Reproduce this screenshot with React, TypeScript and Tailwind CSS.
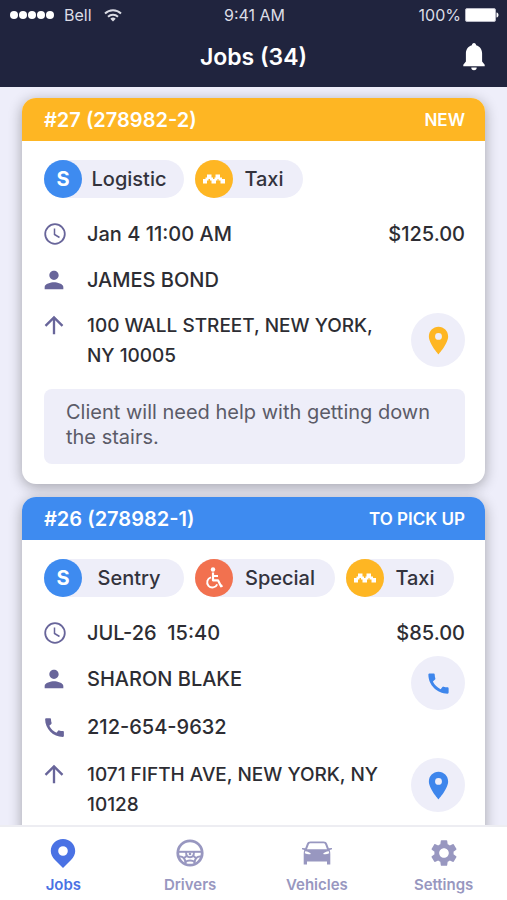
import type { ReactNode } from "react";
import { MdArrowUpward, MdCall, MdLocationOn, MdPerson, MdSettings } from "react-icons/md";

type Service = "logistic" | "sentry" | "special" | "taxi";

type Job = {
  title: string;
  status: string;
  headerClass: string;
  accentClass: string;
  services: Service[];
  time: string;
  price: string;
  client: string;
  phone?: string;
  address: string;
  note?: string;
};

const jobs: Job[] = [
  {
    title: "#27 (278982-2)",
    status: "NEW",
    headerClass: "bg-[#feb623]",
    accentClass: "text-[#feb623]",
    services: ["logistic", "taxi"],
    time: "Jan 4 11:00 AM",
    price: "$125.00",
    client: "JAMES BOND",
    address: "100 WALL STREET, NEW YORK, NY 10005",
    note: "Client will need help with getting down the stairs.",
  },
  {
    title: "#26 (278982-1)",
    status: "TO PICK UP",
    headerClass: "bg-[#3e8bf0]",
    accentClass: "text-[#3e86ec]",
    services: ["sentry", "special", "taxi"],
    time: "JUL-26  15:40",
    price: "$85.00",
    client: "SHARON BLAKE",
    phone: "212-654-9632",
    address: "1071 FIFTH AVE, NEW YORK, NY 10128",
  },
];

function TaxiIcon() {
  return (
    <svg width="24" height="12" viewBox="0 0 24 12" fill="currentColor" aria-hidden="true">
      <path d="M1 6h4v4.500H1zM5 1.500h4.500V6H5zM9.500 6h4.500v4.500H9.500zM13.500 1.500H18V6h-4.500zM18.500 6H23v4.500h-4.500z" />
      <path d="M3.500 4.500h3v3h-3zM8 4.500h3v3H8zM12.500 4.500h3v3h-3zM16.500 4.500h3.500v3h-3.500z" />
    </svg>
  );
}

function WheelchairIcon() {
  return (
    <svg width="18" height="22" viewBox="0 0 18 22" fill="none" stroke="currentColor" aria-hidden="true">
      <circle cx="8" cy="2.500" r="2.200" fill="currentColor" stroke="none" />
      <path d="M8 5.500v7.800h5l3 6 1.500-.8" strokeWidth="2.200" strokeLinejoin="round" />
      <path d="M8.500 9h4.500" strokeWidth="1.800" />
      <path d="M6 10.300a5.200 5.200 0 1 0 6.200 7" strokeWidth="1.900" />
    </svg>
  );
}

function ClockIcon() {
  return (
    <svg width="22" height="22" viewBox="0 0 22 22" fill="none" stroke="currentColor" strokeWidth="1.8" aria-hidden="true">
      <circle cx="11" cy="11" r="9.8" />
      <path d="M10.5 5.5v6l5 3" strokeWidth="1.5" />
    </svg>
  );
}

function BellIcon() {
  return (
    <svg width="22" height="28" viewBox="0 0 22 28" fill="currentColor" aria-hidden="true">
      <path d="M11 0c1.3 0 2.100 1 2.100 2.300 3.900 1 6 4.300 6 8.300v8l2.600 3.200v1.500H.3v-1.500l2.600-3.200v-8c0-4 2.100-7.300 6-8.300C8.900 1 9.700 0 11 0z" />
      <path d="M8.300 24.500h5.400a2.700 2.700 0 0 1-5.400 0z" />
    </svg>
  );
}

function WifiIcon() {
  return (
    <svg width="18" height="13" viewBox="0 0 18 13" fill="none" stroke="currentColor" strokeWidth="1.900" aria-hidden="true">
      <path d="M1 4.500a11.500 11.500 0 0 1 16 0" />
      <path d="M4 7.700a7.200 7.200 0 0 1 10 0" />
      <path d="M9 12.500 6.300 9.700a4 4 0 0 1 5.400 0z" fill="currentColor" stroke="none" />
    </svg>
  );
}

function BatteryIcon() {
  return (
    <svg width="34" height="14" viewBox="0 0 34 14" aria-hidden="true">
      <rect x=".5" y=".5" width="30" height="13" rx="1.500" fill="#fff" stroke="#b9bac6" />
      <path d="M31.500 4.500c1.500.3 2 1.300 2 2.500s-.5 2.200-2 2.500z" fill="#fff" />
    </svg>
  );
}

function JobsIcon() {
  return (
    <svg width="26" height="29" viewBox="0 0 26 29" fill="currentColor" aria-hidden="true">
      <path
        fillRule="evenodd"
        d="M13 0c6.900 0 12.200 5.200 12.200 12 0 3.600-1.700 6.400-4.200 9l-8 8-8-8c-2.500-2.600-4.200-5.400-4.200-9C.8 5.200 6.100 0 13 0zm0 7.200a4.800 4.800 0 1 0 0 9.600 4.800 4.800 0 0 0 0-9.600z"
      />
    </svg>
  );
}

function WheelIcon() {
  return (
    <svg width="28" height="28" viewBox="0 0 28 28" fill="none" stroke="currentColor" aria-hidden="true">
      <circle cx="14" cy="14" r="12.200" strokeWidth="2.800" />
      <path d="M2.500 12.800h23" strokeWidth="2" />
      <path d="M3 17.500c4-.5 6.500 2 6.500 7M25 17.500c-4-.5-6.500 2-6.500 7" strokeWidth="2" />
      <path d="M10 12.800c0 4 1.500 5.500 4 5.500s4-1.500 4-5.500M10.500 17 7.500 19.500M17.500 17l3 2.500M9.500 23.500c1-2.600 8-2.600 9 0" strokeWidth="1.900" />
      <circle cx="14" cy="15" r="1.300" fill="currentColor" stroke="none" />
    </svg>
  );
}

function CarIcon() {
  return (
    <svg width="30" height="24" viewBox="0 0 30 24" fill="currentColor" aria-hidden="true">
      <path
        fillRule="evenodd"
        d="M8.500.5h13c1.900 0 3 .7 3.600 2.300l1.700 4.500 2.600-.4c.8 0 .9 1.200.1 1.500l-1.800.6c.5 1.400.6 2.500.6 4v10.500h-3.300v-3H5v3H1.700V13c0-1.500.1-2.600.6-4L.5 8.400c-.8-.3-.7-1.500.1-1.500l2.600.4 1.700-4.500C5.500 1.200 6.600.5 8.500.5zm.4 1.800c-1.200 0-1.800.4-2.200 1.400L5 8.200h20l-1.700-4.500c-.4-1-1-1.400-2.200-1.400zM3.200 10.300l-.4 2c2 1.200 4.300 1.200 6.200.8-.9-1.700-3.200-2.500-5.800-2.800zm23.600 0c-2.600.3-4.900 1.100-5.800 2.800 1.900.4 4.200.4 6.200-.8z"
      />
    </svg>
  );
}

const services: Record<Service, { label: string; color: string; width: string; icon: ReactNode }> = {
  logistic: {
    label: "Logistic",
    color: "bg-[#3e8bf0]",
    width: "min-w-[140px]",
    icon: <span className="text-xl font-bold">S</span>,
  },
  sentry: {
    label: "Sentry",
    color: "bg-[#3e8bf0]",
    width: "min-w-[140px]",
    icon: <span className="text-xl font-bold">S</span>,
  },
  special: {
    label: "Special",
    color: "bg-[#f2714f]",
    width: "min-w-[140px]",
    icon: <WheelchairIcon />,
  },
  taxi: { label: "Taxi", color: "bg-[#feb623]", width: "min-w-[108px]", icon: <TaxiIcon /> },
};

function Chip({ service }: { service: Service }) {
  const { label, color, width, icon } = services[service];
  return (
    <li className={`flex h-[38px] items-center rounded-full bg-[#eeeef9] ${width}`}>
      <span className={`flex size-[38px] items-center justify-center rounded-full text-white ${color}`}>
        {icon}
      </span>
      <span className="flex-1 pr-2 text-center text-[#33333d]">{label}</span>
    </li>
  );
}

function RoundButton({ label, color, children }: { label: string; color: string; children: ReactNode }) {
  return (
    <button
      type="button"
      aria-label={label}
      className={`flex size-[54px] shrink-0 items-center justify-center rounded-full bg-[#eeeef9] ${color}`}
    >
      {children}
    </button>
  );
}

function JobCard({ job }: { job: Job }) {
  return (
    <article className="overflow-hidden rounded-[14px] bg-white shadow-[0_3px_14px_rgba(0,0,0,0.32)]">
      <header className={`flex h-[43px] items-center justify-between pr-5 pl-[22px] text-white ${job.headerClass}`}>
        <h2 className="text-xl font-semibold">{job.title}</h2>
        <span className="text-[17px] leading-5 font-semibold">{job.status}</span>
      </header>
      <div className="pt-[19px] pr-5 pb-5 pl-[22px] text-[20px] font-medium text-[#2d2d33]">
        <ul className="mb-[13px] flex gap-[11px]">
          {job.services.map((service) => (
            <Chip key={service} service={service} />
          ))}
        </ul>
        <div className="flex h-[46px] items-center">
          <span className="w-[43px] text-[#68659a]">
            <ClockIcon />
          </span>
          <span className="flex-1 whitespace-pre">{job.time}</span>
          <span>{job.price}</span>
        </div>
        <div className="flex">
          <div className="flex-1">
            <div className="flex h-[46px] items-center">
              <span className="w-[43px] text-[#68659a]">
                <MdPerson size={28} className="-ml-1" />
              </span>
              <span>{job.client}</span>
            </div>
            {job.phone && (
              <div className="flex h-[50px] items-center">
                <span className="w-[43px] text-[#68659a]">
                  <MdCall size={25} className="-ml-0.5" />
                </span>
                <a href={`tel:${job.phone}`}>{job.phone}</a>
              </div>
            )}
            <div className="mt-2 flex">
              <span className="w-[43px] shrink-0 text-[#68659a]">
                <MdArrowUpward size={28} className="-ml-1" />
              </span>
              <address className="flex-1 pr-4 text-[19px] leading-[30px] not-italic">{job.address}</address>
            </div>
          </div>
          <div className={`flex flex-col gap-12 ${job.phone ? "justify-start" : "justify-end pb-1"}`}>
            {job.phone && (
              <RoundButton label={`Call ${job.client}`} color={job.accentClass}>
                <MdCall size={27} />
              </RoundButton>
            )}
            <RoundButton label="Show on map" color={job.accentClass}>
              <MdLocationOn size={33} />
            </RoundButton>
          </div>
        </div>
        {job.note && (
          <p className="mt-[18px] rounded-lg bg-[#eeeef9] px-[22px] pt-[11px] pb-[14px] leading-[25px] font-normal text-[#5b5b68]">
            {job.note}
          </p>
        )}
      </div>
    </article>
  );
}

const tabs = [
  { label: "Jobs", icon: <JobsIcon />, active: true },
  { label: "Drivers", icon: <WheelIcon />, active: false },
  { label: "Vehicles", icon: <CarIcon />, active: false },
  { label: "Settings", icon: <MdSettings size={32} />, active: false },
];

export default function App() {
  return (
    <div className="flex h-screen flex-col bg-[#eeeefa] font-['Inter','Liberation_Sans',sans-serif]">
      <header className="h-[87px] shrink-0 bg-[#20243e] text-white">
        <div className="grid h-[30px] grid-cols-3 items-center pr-2 pl-2.5 text-base text-[#dcdde6]">
          <div className="flex items-center">
            <span className="flex gap-px text-white">
              {[1, 2, 3, 4, 5].map((dot) => (
                <span key={dot} className="size-[8px] rounded-full bg-white" />
              ))}
            </span>
            <span className="mr-3 ml-2.5">Bell</span>
            <WifiIcon />
          </div>
          <span className="text-center">9:41 AM</span>
          <div className="flex items-center justify-end gap-1">
            <span>100%</span>
            <BatteryIcon />
          </div>
        </div>
        <div className="grid h-[54px] grid-cols-[1fr_auto_1fr] items-center px-[22px]">
          <h1 className="col-start-2 text-[23px] font-semibold">Jobs (34)</h1>
          <button type="button" aria-label="Notifications" className="justify-self-end">
            <BellIcon />
          </button>
        </div>
      </header>
      <main className="flex min-h-0 flex-1 flex-col gap-[13px] overflow-hidden px-[22px] pt-[11px]">
        {jobs.map((job) => (
          <div key={job.title} className="shrink-0">
            <JobCard job={job} />
          </div>
        ))}
      </main>
      <nav className="relative grid h-[75px] shrink-0 grid-cols-4 border-t-2 border-[#ededf2] bg-white">
        {tabs.map((tab) => (
          <a
            key={tab.label}
            href="#"
            aria-current={tab.active ? "page" : undefined}
            className={`flex flex-col items-center pt-2.5 text-[15px] leading-5 font-semibold ${
              tab.active ? "text-[#4a72e4]" : "text-[#9897c0]"
            }`}
          >
            <span className="mb-1.5 flex h-8 items-center">{tab.icon}</span>
            {tab.label}
          </a>
        ))}
      </nav>
    </div>
  );
}
